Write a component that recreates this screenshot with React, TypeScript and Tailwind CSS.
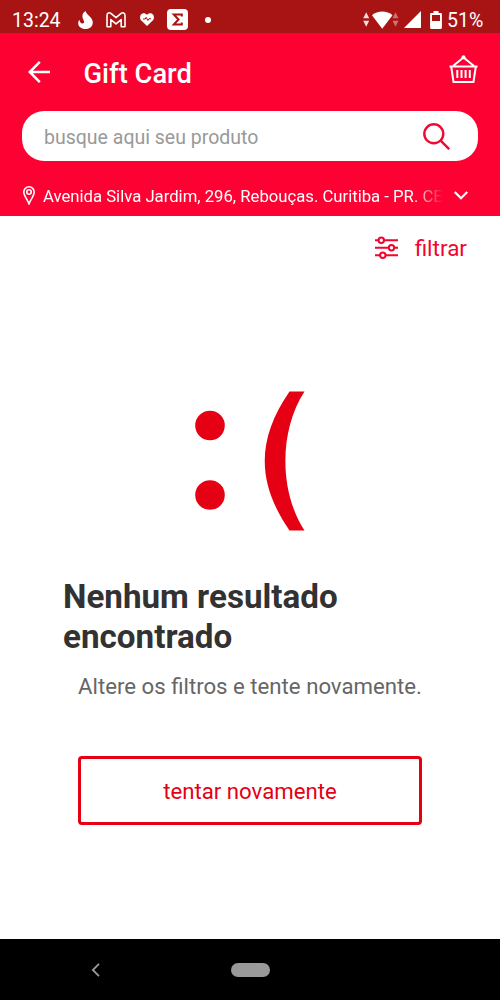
const StatusBar = () => {
  return (
    <div className="flex h-[33px] items-center justify-between bg-[#a81414] pt-1.5 pr-4 pl-3 text-white">
      <div className="flex items-center">
        <span className="w-[66px] pt-0.5 text-[19.5px] leading-7 whitespace-nowrap">13:24</span>
        <svg className="h-[18px] w-[15px]" viewBox="0 0 15 18">
          <path
            d="M7.600 0C8.300 4.200 14.800 6 14.800 11.400c0 3.800-3 6.600-7.300 6.600C3.200 18 .2 15.300.2 12.200c0-1.500.4-2.500 1.300-3.200.3 2.300 1.400 3.500 2.900 3.500 1.300 0 2-1 1.600-2.300C5.500 8.600 4.400 7.600 4.400 5 4.400 2.700 5.700 1.200 7.600 0Z"
            fill="currentColor"
          />
        </svg>
        <svg className="ml-[13px] h-4 w-5" viewBox="0 0 20 16" fill="none" stroke="currentColor" strokeWidth="1.600">
          <path
            d="M1 3.200C1 1.200 3.200.1 4.900 1.400L10 5.600l5.100-4.200C16.800.1 19 1.200 19 3.200V14.800h-3.800V7.600L10 11.900 4.800 7.600v7.200H1V3.200Z"
            strokeLinejoin="round"
          />
        </svg>
        <svg className="ml-3.5 h-[13px] w-3.5" viewBox="0 0 14 13">
          <path d="M7 13 1.300 7.500C-.3 5.900-.3 3.200 1 1.600 2.600-.3 5.400-.2 7 1.800 8.600-.2 11.400-.3 13 1.600c1.300 1.600 1.300 4.300-.3 5.900L7 13Z" fill="currentColor" />
          <path d="M3 6h2.200l1-1.700 1.700 3.200 1.100-1.800h2" stroke="#a81414" strokeWidth="1" fill="none" />
        </svg>
        <svg className="ml-[13px] h-[21px] w-[21px]" viewBox="0 0 21 21">
          <rect width="21" height="21" rx="4" fill="currentColor" />
          <path d="M14.800 7.500V5.500H6.800l4.700 5-4.700 5h8v-2" stroke="#a81414" strokeWidth="2" fill="none" />
        </svg>
        <span className="ml-[17px] size-1.5 rounded-full bg-white" />
      </div>
      <div className="flex items-center">
        <svg className="h-[18px] w-[37px]" viewBox="0 0 37 18">
          <path d="M3.200 1.300 6.200 7.300h-6ZM3.200 15.700l3-6h-6Z" fill="currentColor" opacity=".85" />
          <path d="M9 4.200C14.500-.6 24-.6 29.500 4.200L19.200 17.700Z" fill="currentColor" />
          <path d="m32.500 1.300 3 6h-6ZM32.500 15.700l3-6h-6Z" fill="currentColor" opacity=".4" />
        </svg>
        <svg className="ml-1 h-[17px] w-[17px]" viewBox="0 0 17 17">
          <path d="M17 0v17H0Z" fill="currentColor" />
        </svg>
        <svg className="ml-[9px] h-[18px] w-3" viewBox="0 0 12 18">
          <path d="M3.500 0h5v2h2.200c.7 0 1.200.5 1.200 1.200v13.500c0 .7-.5 1.200-1.200 1.200H1.300C.6 18 .1 17.400.1 16.700V3.200C.1 2.500.6 2 1.300 2h2.200V0Z" fill="currentColor" />
          <path d="M2 4h8v6H2Z" fill="#a81414" />
        </svg>
        <span className="ml-[5px] w-[37px] pt-0.5 text-[19.5px] leading-7 whitespace-nowrap">51%</span>
      </div>
    </div>
  );
};

const BasketIcon = () => {
  return (
    <svg className="h-[29px] w-[29px]" viewBox="0 0 29 29" fill="none" stroke="currentColor" strokeWidth="2" strokeLinejoin="round">
      <path d="M.5 11.500h28M2.200 11.500l2.300 15.500h20l2.300-15.500M4 11 14.500 2.500 25 11" />
      <path d="M8.300 15v8M12.500 15v8M16.600 15v8M20.800 15v8" />
      <circle cx="14.500" cy="2.300" r="2" fill="currentColor" stroke="none" />
    </svg>
  );
};

const Header = () => {
  return (
    <header className="h-[183px] bg-[#fc0131] text-white">
      <div className="flex h-[78px] items-center pr-[22px] pl-7">
        <svg className="h-[22px] w-[22px]" viewBox="0 0 22 22" fill="none" stroke="currentColor" strokeWidth="2.500">
          <path d="M22 11H1.900M11.800.9 1.800 11l10 10.100" />
        </svg>
        <h1 className="ml-[33.5px] pt-[3px] text-[27.3px] leading-8 font-medium">Gift Card</h1>
        <div className="ml-auto -mt-1.5">
          <BasketIcon />
        </div>
      </div>
      <div className="mx-[22px] flex h-[50px] items-center justify-between rounded-[22px] bg-white pr-7 pl-[22px]">
        <span className="pt-[3px] text-[19.5px] text-[#999]">busque aqui seu produto</span>
        <svg className="h-[27px] w-[27px] text-[#ef0a32]" viewBox="0 0 27 27" fill="none" stroke="currentColor" strokeWidth="2.400">
          <circle cx="10.800" cy="10.800" r="9.500" />
          <path d="m17.700 17.700 8.500 8.500" />
        </svg>
      </div>
      <div className="mt-[22px] flex h-6 items-center pl-[23px]">
        <svg className="h-[19px] w-3" viewBox="0 0 12 19" fill="none" stroke="currentColor" strokeWidth="1.600">
          <path d="M6 17.800C4.500 14 .8 9.500.8 6a5.200 5.200 0 0 1 10.400 0c0 3.500-3.700 8-5.200 11.800Z" />
          <circle cx="6" cy="6" r="2.200" />
        </svg>
        <span className="ml-2 w-[401px] mask-r-from-92% mask-r-to-100% pt-[3px] text-[16.7px] whitespace-nowrap">
          Avenida Silva Jardim, 296, Rebouças. Curitiba - PR. CE
        </span>
        <svg className="ml-[10px] h-[9px] w-3.5" viewBox="0 0 14 9" fill="none" stroke="currentColor" strokeWidth="2.200">
          <path d="m.8 1 6.200 6.200L13.200 1" />
        </svg>
      </div>
    </header>
  );
};

const FilterButton = () => {
  return (
    <button className="flex h-[63px] items-center self-end pr-[33px] text-[#f20530]">
      <svg className="h-6 w-6" viewBox="0 0 24 24" fill="none" stroke="currentColor" strokeWidth="2">
        <path d="M0 4.200h3.500M9 4.200h14M0 11.700h13.500M19 11.700h4M0 19.200h5M10.500 19.200h12.500" />
        <circle cx="6.300" cy="4.200" r="2.700" />
        <circle cx="16.500" cy="11.700" r="2.700" />
        <circle cx="7.800" cy="19.200" r="2.700" />
      </svg>
      <span className="ml-4 pt-0.5 text-[22.5px]">filtrar</span>
    </button>
  );
};

const EmptyState = () => {
  return (
    <div className="flex flex-col">
      <svg className="mt-[112px] ml-[195px] h-[140px] w-[110px] text-[#e60014]" viewBox="0 0 110 140" fill="currentColor">
        <circle cx="15" cy="34.500" r="14.800" />
        <circle cx="15" cy="104" r="14.800" />
        <path d="M94.500.5H109.500C84 39.500 84 100.500 109.500 139.500H94.500C61.500 91.500 61.500 48.500 94.500.5Z" />
      </svg>
      <h2 className="mt-[46px] ml-[63px] w-[320px] text-[33.2px] leading-[39.5px] font-bold text-[#323232]">
        Nenhum resultado encontrado
      </h2>
      <p className="mt-3.5 text-center text-[22.2px] leading-8 text-[#666]">Altere os filtros e tente novamente.</p>
      <button className="mx-[78px] mt-[54px] h-[69px] rounded-[4px] border-[3px] border-[#e60014] pt-0.5 text-[22.2px] text-[#e60014]">
        tentar novamente
      </button>
    </div>
  );
};

const NavBar = () => {
  return (
    <nav className="mt-auto flex h-[61px] items-center bg-black pl-[91px] text-[#999]">
      <svg className="h-3.5 w-[9px]" viewBox="0 0 9 14" fill="none" stroke="currentColor" strokeWidth="1.800">
        <path d="M8 .8 1.800 7 8 13.200" />
      </svg>
      <div className="ml-[131px] h-3.5 w-[39px] rounded-full bg-[#999]" />
    </nav>
  );
};

const App = () => {
  return (
    <div className="flex h-[1000px] w-[500px] flex-col overflow-hidden bg-white font-[Roboto,sans-serif]">
      <StatusBar />
      <Header />
      <FilterButton />
      <EmptyState />
      <NavBar />
    </div>
  );
};

export default App;
